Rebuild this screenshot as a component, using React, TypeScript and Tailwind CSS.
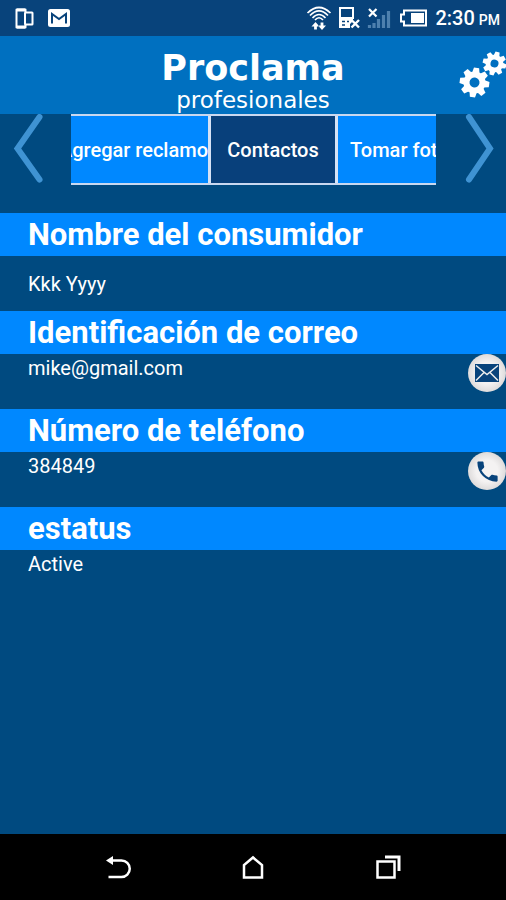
interface ISection {
    title: string
    value: string
    spaced?: boolean
    action?: "mail" | "phone"
}

const sections: ISection[] = [
    { title: "Nombre del consumidor", value: "Kkk Yyyy", spaced: true },
    { title: "Identificación de correo", value: "mike@gmail.com", action: "mail" },
    { title: "Número de teléfono", value: "384849", action: "phone" },
    { title: "estatus", value: "Active" },
];

const teeth = [0, 45, 90, 135, 180, 225, 270, 315];

const Gear = ({ x, y, scale, turn }: { x: number, y: number, scale: number, turn: number }) => (
    <g transform={`translate(${x} ${y}) rotate(${turn}) scale(${scale})`}>
        <circle r="8" fill="none" stroke="#fff" strokeWidth="6" />
        {teeth.map((angle) => (
            <path key={angle} d="M-3.8 -9 L-2.6 -14.8 H2.6 L3.8 -9Z" fill="#fff" transform={`rotate(${angle})`} />
        ))}
    </g>
);

const StatusBar = () => (
    <div className="flex h-9 items-center justify-between bg-[#08437b] pl-3 pr-1.5 text-white">
        <div className="flex items-center gap-3">
            <svg width="24" height="24" viewBox="0 0 24 24" fill="none" stroke="#fff" strokeWidth="2">
                <path d="M13.5 6V3.5h-9v18h9V19" strokeLinejoin="round" />
                <path d="M5 4h8M5 21h8" strokeWidth="3" />
                <rect x="13" y="6.5" width="7.5" height="12" rx="0.5" />
            </svg>
            <svg width="22" height="18" viewBox="0 0 22 18">
                <rect width="22" height="18" rx="2.5" fill="#fff" />
                <path d="M4 14.5V5l7 5 7-5v9.5" fill="none" stroke="#08437b" strokeWidth="2" />
            </svg>
        </div>
        <div className="flex items-center gap-1.5">
            <svg width="26" height="26" viewBox="0 0 26 26" fill="none" stroke="#fff" strokeWidth="1.7">
                <path d="M1.500 8Q13-3 24.500 8" />
                <path d="M4 10.500Q13 1.500 22 10.500" />
                <path d="M6.500 13Q13 6 19.500 13" />
                <path d="M9 15Q13 10.500 17 15" />
                <path d="M9.500 24.500v-4M16 17.500v4" strokeWidth="2.800" />
                <path d="M5.500 21.500l4-4.500 4 4.500zM12 20.500l4 4.500 4-4.500z" fill="#fff" stroke="none" />
            </svg>
            <svg width="23" height="22" viewBox="0 0 23 22" fill="none" stroke="#fff" strokeWidth="2">
                <path d="M2 1h13v10H2z" />
                <path d="M1 11h14v3l-3 3v4H1z" fill="#fff" stroke="none" />
                <path d="M4 14.500h3M9 14.500h2M4 18h3" stroke="#08437b" strokeWidth="1.500" />
                <path d="M13.500 13l7.500 7.500M21 13l-7.500 7.500" strokeWidth="2.400" />
            </svg>
            <svg width="24" height="22" viewBox="0 0 24 22">
                <path d="M2 2l7.500 7.500M9.500 2L2 9.500" stroke="#fff" strokeWidth="2.200" />
                <path d="M2.500 21v-3M7 21v-5M11.500 21v-9M16.500 21V8M21.500 21V4" stroke="#4d80ae" strokeWidth="3.200" />
            </svg>
            <svg className="ml-0.5" width="30" height="18" viewBox="0 0 30 18">
                <path d="M5 1.500h22v15H5v-4H2v-7h3z" fill="none" stroke="#fff" strokeWidth="2" />
                <path d="M12 4h13v10H12z" fill="#fff" />
            </svg>
            <span className="flex items-baseline gap-1 font-medium">
                <span className="text-xl">2:30</span>
                <span className="text-sm">PM</span>
            </span>
        </div>
    </div>
);

const Header = () => (
    <header className="relative h-[78px] bg-[#0070c0] pt-3 text-center font-['DejaVu_Sans','Liberation_Sans',sans-serif] text-white">
        <h1 className="text-[35px] leading-10 font-bold">Proclama</h1>
        <p className="text-[23px] leading-6">profesionales</p>
        <button type="button" aria-label="Ajustes" className="absolute right-0 top-3">
            <svg width="48" height="52" viewBox="0 0 48 52">
                <Gear x={16.5} y={34.5} scale={1} turn={8} />
                <Gear x={36.5} y={15.5} scale={0.8} turn={15} />
            </svg>
        </button>
    </header>
);

const Tabs = () => (
    <nav className="flex h-[71px] text-xl font-medium text-white">
        <button type="button" aria-label="Anterior" className="w-[71px] shrink-0">
            <svg width="71" height="71" viewBox="0 0 71 71" fill="none" stroke="#3f93d3" strokeWidth="6" strokeLinecap="round">
                <path d="M39.500 3L17.500 34.500l22 31" />
            </svg>
        </button>
        <div className="flex min-w-0 flex-1 gap-[3px] overflow-hidden border-y-2 border-[#c9d8f0] bg-[#d6e2f5] whitespace-nowrap">
            <button type="button" className="flex w-[137px] shrink-0 items-center justify-end overflow-hidden bg-[#0088ff]">Agregar reclamo</button>
            <button type="button" className="w-[124px] shrink-0 bg-[#08407b]">Contactos</button>
            <button type="button" className="min-w-0 flex-1 overflow-hidden bg-[#0088ff] pl-3 text-left">Tomar foto</button>
        </div>
        <button type="button" aria-label="Siguiente" className="w-[70px] shrink-0">
            <svg width="70" height="71" viewBox="0 0 70 71" fill="none" stroke="#3f93d3" strokeWidth="6" strokeLinecap="round">
                <path d="M33 3l21 31.500-21 31" />
            </svg>
        </button>
    </nav>
);

const ActionButton = ({ action }: { action: "mail" | "phone" }) => (
    <button type="button" aria-label={action === "mail" ? "Enviar correo" : "Llamar"} className="flex size-[38px] items-center justify-center rounded-full bg-radial from-[#f4f2f2] from-40% to-[#c9c6c6]">
        {action === "mail" ? (
            <svg width="24" height="18" viewBox="0 0 24 18">
                <rect width="24" height="18" fill="#08437b" />
                <path d="M1 1.500l11 9 11-9M1 16.500l8-8M23 16.500l-8-8" fill="none" stroke="#eee" strokeWidth="1.500" />
            </svg>
        ) : (
            <svg width="27" height="27" viewBox="0 0 24 24" fill="#08437b">
                <path d="M6.620 10.790c1.440 2.830 3.760 5.140 6.590 6.590l2.200-2.200c.27-.27.67-.36 1.020-.24 1.120.37 2.330.57 3.570.57.550 0 1 .45 1 1V20c0 .550-.45 1-1 1C10.610 21 3 13.390 3 4c0-.550.45-1 1-1h3.500c.550 0 1 .45 1 1 0 1.250.2 2.450.57 3.570.11.350.03.740-.25 1.020z" />
            </svg>
        )}
    </button>
);

const Section = ({ title, value, spaced, action }: ISection) => (
    <section>
        <h2 className="bg-[#0088ff] pl-7 text-[31px] leading-[43px] font-bold">{title}</h2>
        <div className={spaced ? "flex h-[55px] items-center pl-7" : "flex h-[55px] items-start justify-between pl-7"}>
            <p className="text-xl leading-7">{value}</p>
            {action && <ActionButton action={action} />}
        </div>
    </section>
);

const NavBar = () => (
    <nav className="grid h-[66px] grid-cols-[1fr_repeat(3,135px)_1fr] bg-black">
        <button type="button" aria-label="Atrás" className="col-start-2 flex items-center justify-center">
            <svg width="26" height="26" viewBox="0 0 26 26" fill="none" stroke="#fff" strokeWidth="2.500">
                <path d="M6 6.500h10.500a8 8 0 0 1 0 16.500H3.500" />
                <path d="M1 6.500l7-4.500v9z" fill="#fff" stroke="none" />
            </svg>
        </button>
        <button type="button" aria-label="Inicio" className="flex items-center justify-center">
            <svg width="24" height="26" viewBox="0 0 24 26" fill="none" stroke="#fff" strokeWidth="2.500">
                <path d="M3 23.500V11l9-7.500 9 7.500v12.500z" />
            </svg>
        </button>
        <button type="button" aria-label="Recientes" className="flex items-center justify-center">
            <svg width="26" height="26" viewBox="0 0 26 26" fill="none" stroke="#fff" strokeWidth="2.500">
                <path d="M2.500 7.500h17v16h-17z" />
                <path d="M10 3h14v14" strokeWidth="3" />
            </svg>
        </button>
    </nav>
);

const App = () => {
    return (
        <div className="flex min-h-screen flex-col bg-[#004a80] font-[Roboto,sans-serif] text-white">
            <StatusBar />
            <Header />
            <Tabs />
            <main className="flex-1 pt-7">
                {sections.map((section) => (
                    <Section key={section.title} {...section} />
                ))}
            </main>
            <NavBar />
        </div>
    );
};

export default App;
